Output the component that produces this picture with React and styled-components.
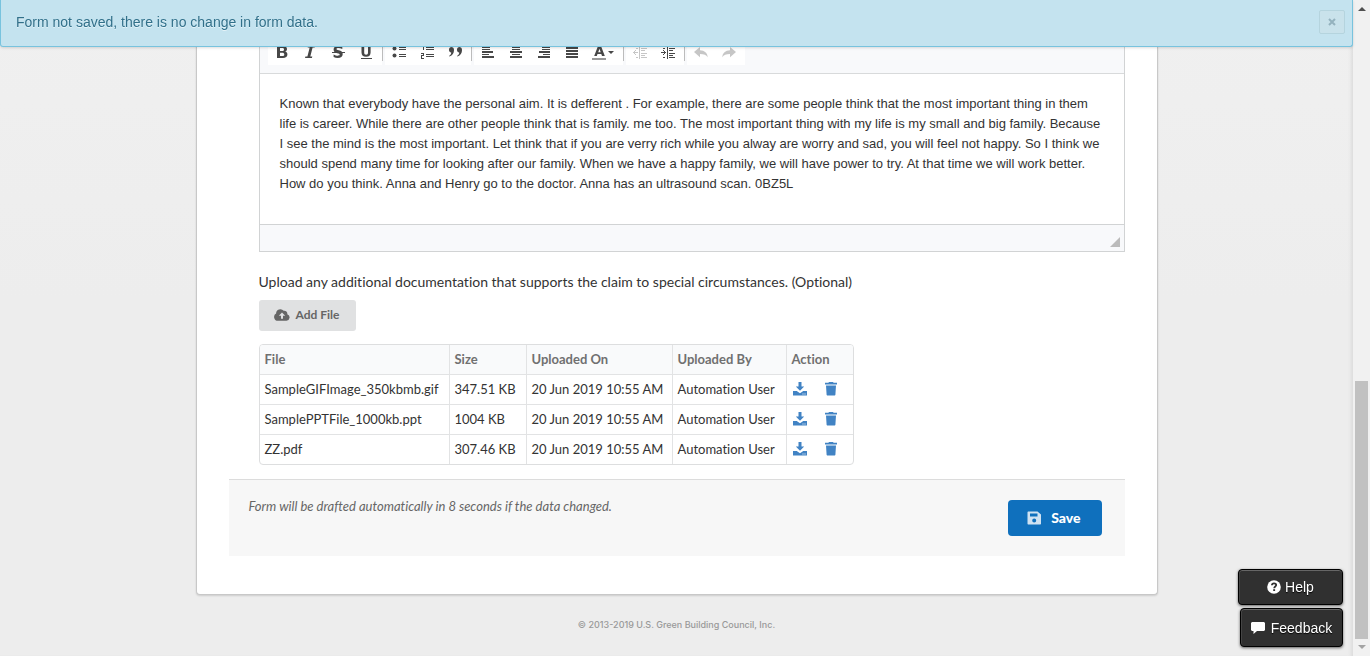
import React, { Fragment } from "react";
import styled, { createGlobalStyle, css } from "styled-components";

const Global = createGlobalStyle`
  * { box-sizing: border-box; }
  html, body { height: 100%; overflow: hidden; }
  body {
    margin: 0;
    background: linear-gradient(#f0f0f0, #ededed 300px);
    color: #333;
    font: 14px/20px Lato, sans-serif;
    font-variant-ligatures: none;
  }
  button, textarea { font: inherit; margin: 0; border: 0; }
`;

const Shell = styled.div`
  display: grid;
  grid-template-columns: 1fr 17px;
  height: 100vh;
`;

const Page = styled.main`
  display: flex;
  flex-direction: column;
  align-items: center;
  overflow: hidden;
  box-shadow: inset -4px 0 4px -3px #d4d4d4;
`;

const Notice = styled.div`
  position: fixed;
  top: 0;
  left: 0;
  right: 17px;
  z-index: 2;
  display: flex;
  align-items: center;
  justify-content: space-between;
  height: 47px;
  padding: 0 7px 2px 15px;
  background: #c4e3ef;
  border: 1px solid #78c3de;
  border-top: 0;
  border-radius: 0 0 3px 3px;
  box-shadow: 0 1px 3px #0002;
  color: #31708a;
  font: 14px/20px "Liberation Sans", sans-serif;
  text-shadow: 0 1px 0 #fff8;
`;

const CloseButton = styled.button`
  display: grid;
  place-items: center;
  width: 26px;
  height: 24px;
  background: #c9e2eb;
  border: 1px solid #b5d4de;
  border-radius: 2px;
  color: #94b2be;
`;

const Card = styled.section`
  width: calc(100% - 32px);
  max-width: 962px;
  padding: 0 32px 38px;
  background: #fff;
  border: 1px solid #c8c8c8;
  border-top: 0;
  border-radius: 0 0 4px 4px;
  box-shadow: 0 1px 2px #0002;
`;

const Fields = styled.div`
  padding: 16px 0 14px 30px;
`;

const Editor = styled.div`
  border: 1px solid #d1d3d4;
  background: #fff;
`;

const Toolbar = styled.div`
  display: flex;
  padding: 18px 8px 8px;
  background: #f8f9fb;
  border-bottom: 1px solid #d8dadb;
`;

const ToolGroup = styled.div`
  display: flex;
  align-items: center;
  height: 30px;
  padding: 4px 2px 0 0;
  background: #fff;
`;

const Divider = styled.span`
  width: 1px;
  height: 26px;
  margin-right: 2px;
  background: #bcbcbc;
`;

const ToolButton = styled.button`
  display: grid;
  place-items: center;
  width: ${(p) => (p.$wide ? 35 : 28)}px;
  height: 26px;
  padding: 0;
  background: none;
  color: #474747;
  opacity: ${(p) => (p.disabled ? 0.3 : 1)};
`;

const EditorText = styled.textarea`
  display: block;
  width: 100%;
  height: 150px;
  padding: 20px;
  resize: none;
  overflow: hidden;
  outline: 0;
  background: #fff;
  color: #333;
  font: 13px/20px "Liberation Sans", sans-serif;
`;

const EditorFoot = styled.div`
  display: flex;
  justify-content: flex-end;
  align-items: flex-end;
  height: 27px;
  padding: 4px;
  background: #f8f9fb;
  border-top: 1px solid #d1d3d4;
`;

const UploadLabel = styled.p`
  margin: 20px 0 8px;
`;

const AddButton = styled.button`
  display: flex;
  align-items: center;
  gap: 6px;
  height: 31px;
  padding: 0 17px 2px 15px;
  background: #e0e1e2;
  border-radius: 3px;
  color: #666;
  font-size: 12px;
  font-weight: 700;
`;

const FileTable = styled.table`
  width: 595px;
  margin-top: 13px;
  table-layout: fixed;
  border: 1px solid #dddedf;
  border-radius: 4px;
  border-spacing: 0;
  overflow: hidden;
  font-size: 13px;
`;

const cell = css`
  height: 30px;
  padding: 0 5px 1px;
  border-top: 1px solid #e2e3e4;
  text-align: left;
  white-space: nowrap;
`;

const Head = styled.th`
  ${cell}
  width: ${(p) => p.$width}px;
  height: 29px;
  border-top: 0;
  background: #f9fafb;
  color: #707070;
  font-weight: 700;
  & + & { border-left: 1px solid #e2e3e4; }
`;

const Cell = styled.td`
  ${cell}
  & + & { border-left: 1px solid #e2e3e4; }
`;

const Actions = styled.div`
  display: flex;
  gap: 15px;
`;

const IconLink = styled.a`
  display: grid;
  place-items: center;
  width: 16px;
  color: #4183c4;
`;

const SaveBar = styled.div`
  display: flex;
  justify-content: space-between;
  align-items: flex-start;
  height: 77px;
  padding: 16px 23px 0 20px;
  background: #f7f7f7;
  border-top: 1px solid #dcdcdc;
  color: #666;
  font-size: 13px;
`;

const SaveButton = styled.button`
  display: flex;
  align-items: center;
  gap: 9px;
  height: 36px;
  margin-top: 4px;
  padding: 0 21px 0 18px;
  background: #0f70bd;
  border-radius: 4px;
  color: #fff;
  font-size: 14px;
  font-weight: 900;
`;

const Copyright = styled.footer`
  margin-top: 20px;
  color: #999;
  font: 500 9px/20px Inter, sans-serif;
`;

const Support = styled.div`
  position: fixed;
  right: 27px;
  bottom: 9px;
  z-index: 2;
  display: flex;
  flex-direction: column;
  align-items: flex-end;
  gap: 3px;
`;

const SupportButton = styled.button`
  display: flex;
  align-items: center;
  justify-content: center;
  gap: ${(p) => (p.$large ? 6 : 4)}px;
  width: ${(p) => (p.$large ? 103 : 105)}px;
  height: ${(p) => (p.$large ? 39 : 36)}px;
  padding: 0;
  background: #303030;
  border: 1px solid #000;
  border-radius: 4px;
  box-shadow: inset 0 1px 0 #666, inset 1px 0 0 #444, 0 1px 3px #0009;
  color: #fff;
  font: 14px/20px "Liberation Sans", sans-serif;
  text-shadow: 0 1px 1px #000;
`;

const ScrollTrack = styled.div`
  display: flex;
  flex-direction: column;
  justify-content: space-between;
  align-items: center;
  padding: 7px 0;
  background: #f1f1f1;
`;

const ScrollThumb = styled.div`
  width: 13px;
  height: calc(40vh - 4px);
  margin: auto 0 6px;
  background: #c1c1c1;
`;

const Svg = ({ size = 16, box = 16, children }) => (
  <svg width={size} height={size} viewBox={`0 0 ${box} ${box}`} fill="currentColor" aria-hidden="true">
    {children}
  </svg>
);

const bars = (d) => <path d={d} shapeRendering="crispEdges" />;

const glyphs = {
  Bold: <path fillRule="evenodd" d="M3 2h5.5C11.500 2 13 3 13 5c0 1.300-.8 2.200-2 2.600 1.500.3 2.400 1.300 2.400 2.900 0 2.300-1.700 3.500-4.500 3.500H3zm3 2v2.900h2c1.300 0 2-.5 2-1.500S9.300 4 8 4zm0 4.800V12h2.200c1.400 0 2.100-.6 2.100-1.600 0-1.100-.7-1.600-2.200-1.600z" />,
  Italic: <path d="M6 2h7l-.4 1.500h-2L8.300 12.500h2L9.900 14H3l.4-1.500h2l2.300-9h-2z" />,
  Strikethrough: <><path d="M12.300 2.600v2.500C11 4.300 9.700 3.900 8.400 3.900c-1.200 0-1.900.4-1.900 1 0 .7.700.9 2.200 1.300 2.700.6 4 1.500 4 3.700 0 2.600-1.800 4.100-5 4.100-1.500 0-2.900-.3-4.100-.9v-2.700c1.500.9 2.800 1.400 4.100 1.400 1.300 0 2-.4 2-1.200 0-.7-.6-1-2.400-1.400C4.800 8.600 3.600 7.600 3.600 5.400 3.600 3.200 5.400 2 8.300 2c1.400 0 2.700.2 4 .6z" />{bars("M2 8h13v1H2z")}</>,
  Underline: <><path d="M3.500 2h2.700v6.500c0 1.500.6 2.200 1.900 2.200s1.900-.7 1.900-2.200V2h2.600v6.500c0 2.800-1.500 4.200-4.500 4.200s-4.600-1.400-4.600-4.200z" />{bars("M3 14h11v1H3z")}</>,
  "Bulleted list": <><circle cx="3.500" cy="4.500" r="2" /><circle cx="3.500" cy="11.500" r="2" />{bars("M8 3h7v1H8zM8 5h7v1H8zM8 10h7v1H8zM8 12h7v1H8z")}</>,
  "Numbered list": bars("M3 1h2v5H4V2H3zM2 9h3v3H3v2h2v1H2v-4h2v-1H2zM7 3h8v1H7zM7 5h8v1H7zM7 10h8v1H7zM7 12h8v1H7z"),
  "Block quote": <path d="M4 3a3 3 0 0 1 3 3c0 3-1.500 5.500-4.500 6.500L2 12c1.500-1 2.200-2 2.300-3.200A3 3 0 0 1 4 3zm8 0a3 3 0 0 1 3 3c0 3-1.500 5.500-4.500 6.500L10 12c1.500-1 2.200-2 2.300-3.200A3 3 0 0 1 12 3z" />,
  "Align left": bars("M2 2h8v2H2zM2 5h8v1H2zM2 7h11v2H2zM2 10h7v1H2zM2 12h12v2H2z"),
  "Align center": bars("M4 2h8v2H4zM4 5h8v1H4zM2 7h12v2H2zM4 10h8v1H4zM2 12h12v2H2z"),
  "Align right": bars("M6 2h8v2H6zM6 5h8v1H6zM3 7h11v2H3zM7 10h7v1H7zM2 12h12v2H2z"),
  Justify: bars("M2 1h12v1H2zM2 3h12v2H2zM2 6h12v2H2zM2 9h12v2H2zM2 12h12v2H2z"),
  "Decrease indent": bars("M1 8h5v1H1zM2 7h1v3H2zM3 6h1v1H3zM3 10h1v1H3zM7 1h1v14H7zM9 4h6v1H9zM9 6h4v1H9zM9 9h6v1H9zM9 11h4v1H9zM9 13h6v1H9zM4 4h2v1H4zM4 13h2v1H4z"),
  "Increase indent": bars("M1 8h5v1H1zM4 7h1v3H4zM3 6h1v1H3zM3 10h1v1H3zM7 1h1v14H7zM9 4h6v1H9zM9 6h4v1H9zM9 9h6v1H9zM9 11h4v1H9zM9 13h6v1H9zM3 4h2v1H3zM3 13h2v1H3z"),
  Undo: <path d="M7 3v3.200c4.500.3 7.500 2.500 7.700 7C13.300 11 11 10 7 10v3.200L1 8z" />,
  Redo: <path d="M9 3v3.200c-4.500.3-7.500 2.500-7.700 7C2.700 11 5 10 9 10v3.200L15 8z" />,
};

const TextColor = () => (
  <svg width="24" height="18" viewBox="0 0 24 18" fill="currentColor" aria-hidden="true">
    <path fillRule="evenodd" d="M7 3h3l3.800 10H11l-.7-2H6.500l-.7 2H3.200zm1.500 2.800L7.200 9.200h2.500z" />
    <path d="M1 15h14v2H1z" fill="#999" />
    <path d="M17 8h6l-3 3z" />
  </svg>
);

const groups = [
  ["Bold", "Italic", "Strikethrough", "Underline"],
  ["Bulleted list", "Numbered list", "Block quote"],
  ["Align left", "Align center", "Align right", "Justify", "Text color"],
  ["Decrease indent", "Increase indent"],
  ["Undo", "Redo"],
];
const disabledTools = ["Decrease indent", "Undo", "Redo"];

const essay =
  "Known that everybody have the personal aim. It is defferent . For example, there are some people think that the most important thing in them life is career. While there are other people think that is family. me too. The most important thing with my life is my small and big family. Because I see the mind is the most important. Let think that if you are verry rich while you alway are worry and sad, you will feel not happy. So I think we should spend many time for looking after our family. When we have a happy family, we will have power to try. At that time we will work better. How do you think. Anna and Henry go to the doctor. Anna has an ultrasound scan. 0BZ5L";

const columns = [["File", 189], ["Size", 77], ["Uploaded On", 146], ["Uploaded By", 114], ["Action", 67]];
const files = [
  ["SampleGIFImage_350kbmb.gif", "347.51 KB"],
  ["SamplePPTFile_1000kb.ppt", "1004 KB"],
  ["ZZ.pdf", "307.46 KB"],
];

const DownloadIcon = () => (
  <Svg size={14} box={14}>
    <path fillRule="evenodd" d="M5.500 0h3v4.500h2.700L7 8.700 2.800 4.500h2.700zM0 9h3.700L7 11.200 10.300 9H14v4.500H0zm9.500 2.500v1h1v-1zm2 0v1h1v-1z" />
  </Svg>
);

const TrashIcon = () => (
  <Svg size={14} box={14}>
    <path d="M5 0h4l.6.8H13v1.700H1V.8h3.400zM2 3.500h10l-.6 9.200c0 .5-.5.8-1 .8H3.600c-.5 0-1-.3-1-.8z" />
  </Svg>
);

export default function App() {
  return (
    <>
      <Global />
      <Shell>
        <Page>
          <Notice role="status">
            Form not saved, there is no change in form data.
            <CloseButton aria-label="Close">
              <svg width="8" height="8" viewBox="0 0 8 8" stroke="currentColor" strokeWidth="2" aria-hidden="true">
                <path d="M1 1l6 6M7 1L1 7" />
              </svg>
            </CloseButton>
          </Notice>
          <Card>
            <Fields>
              <Editor>
                <Toolbar role="toolbar" aria-label="Text formatting">
                  {groups.map((group, i) => (
                    <Fragment key={group[0]}>
                      {i > 0 && <Divider />}
                      <ToolGroup>
                        {group.map((name) => (
                          <ToolButton
                            key={name}
                            aria-label={name}
                            $wide={name === "Text color"}
                            disabled={disabledTools.includes(name)}
                          >
                            {name === "Text color" ? <TextColor /> : <Svg>{glyphs[name]}</Svg>}
                          </ToolButton>
                        ))}
                      </ToolGroup>
                    </Fragment>
                  ))}
                </Toolbar>
                <EditorText aria-label="Special circumstances" spellCheck={false} defaultValue={essay} />
                <EditorFoot>
                  <svg width="10" height="10" viewBox="0 0 10 10" aria-hidden="true">
                    <path d="M10 0v10H0z" fill="#bbb" />
                  </svg>
                </EditorFoot>
              </Editor>
              <UploadLabel>
                Upload any additional documentation that supports the claim to special circumstances. (Optional)
              </UploadLabel>
              <AddButton>
                <svg width="16" height="12" viewBox="0 0 16 12" fill="currentColor" aria-hidden="true">
                  <path fillRule="evenodd" d="M13.300 5.200A3 3 0 0 0 9.700 1.800 4.300 4.300 0 0 0 2.100 4.500 3.900 3.900 0 0 0 4 11.800h8.500a3.400 3.400 0 0 0 .8-6.600zM8 3.500l3.200 3.200H9v3H7v-3H4.800z" />
                </svg>
                Add File
              </AddButton>
              <FileTable>
                <thead>
                  <tr>
                    {columns.map(([name, width]) => (
                      <Head key={name} $width={width} scope="col">{name}</Head>
                    ))}
                  </tr>
                </thead>
                <tbody>
                  {files.map(([name, size]) => (
                    <tr key={name}>
                      <Cell>{name}</Cell>
                      <Cell>{size}</Cell>
                      <Cell>20 Jun 2019 10:55 AM</Cell>
                      <Cell>Automation User</Cell>
                      <Cell>
                        <Actions>
                          <IconLink href="#download" aria-label={`Download ${name}`}><DownloadIcon /></IconLink>
                          <IconLink href="#delete" aria-label={`Delete ${name}`}><TrashIcon /></IconLink>
                        </Actions>
                      </Cell>
                    </tr>
                  ))}
                </tbody>
              </FileTable>
            </Fields>
            <SaveBar>
              <em>Form will be drafted automatically in 8 seconds if the data changed.</em>
              <SaveButton>
                <svg width="16" height="14" viewBox="0 0 16 14" fill="#cfe2f2" aria-hidden="true">
                  <path fillRule="evenodd" d="M2.500.5h9L15 3.500v9c0 .6-.4 1-1 1H2.500c-.6 0-1-.4-1-1v-11c0-.6.400-1 1-1zM4 2.500v3h7.500v-3zm4.200 5a2 2 0 1 0 0 4 2 2 0 0 0 0-4z" />
                </svg>
                Save
              </SaveButton>
            </SaveBar>
          </Card>
          <Copyright>© 2013-2019 U.S. Green Building Council, Inc.</Copyright>
        </Page>
        <ScrollTrack aria-hidden="true">
          <svg width="8" height="4" viewBox="0 0 8 4"><path d="M4 0l4 4H0z" fill="#505050" /></svg>
          <ScrollThumb />
          <svg width="8" height="4" viewBox="0 0 8 4"><path d="M0 0h8L4 4z" fill="#a3a3a3" /></svg>
        </ScrollTrack>
      </Shell>
      <Support>
        <SupportButton>
          <svg width="14" height="14" viewBox="0 0 14 14" aria-hidden="true">
            <circle cx="7" cy="7" r="6.800" fill="#fff" />
            <path d="M4.900 5.300C5 3.900 5.900 3.300 7 3.300s2.200.7 2.200 1.800C9.200 6.500 7.200 6.500 7.200 8.200" fill="none" stroke="#303030" strokeWidth="1.800" />
            <path d="M6.200 9.200h1.900v1.800H6.200z" fill="#303030" />
          </svg>
          Help
        </SupportButton>
        <SupportButton $large>
          <svg width="14" height="12" viewBox="0 0 14 12" fill="#fff" aria-hidden="true">
            <path d="M1 0h12l1 1v7l-1 1H6l-3.500 3V9H1L0 8V1z" />
          </svg>
          Feedback
        </SupportButton>
      </Support>
    </>
  );
}
